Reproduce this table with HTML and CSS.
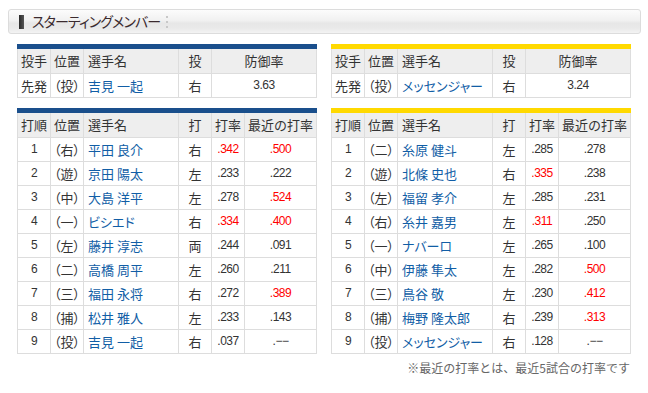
FILE: index.html
```html
<!DOCTYPE html>
<html lang="ja">
<head>
<meta charset="utf-8">
<title>スターティングメンバー</title>
<link rel="stylesheet" href="styles.css">
</head>
<body>
<div class="page">
  <div class="title-box">
    <span class="marker"></span>
    <h2 class="title">スターティングメンバー</h2>
    <span class="dots"><i></i><i></i><i></i></span>
  </div>

  <div class="teams">
    <div class="team">
      <div class="tbl tbl-pitch blue">
        <div class="tr head">
          <div class="c">投手</div><div class="c">位置</div><div class="c name">選手名</div><div class="c">投</div><div class="c">防御率</div>
        </div>
        <div class="tr">
          <div class="c">先発</div><div class="c pos">（投）</div><div class="c name link">吉見 一起</div><div class="c">右</div><div class="c num">3.63</div>
        </div>
      </div>

      <div class="tbl tbl-bat blue">
        <div class="tr head">
          <div class="c">打順</div><div class="c">位置</div><div class="c name">選手名</div><div class="c">打</div><div class="c">打率</div><div class="c">最近の打率</div>
        </div>
        <div class="tr"><div class="c num">1</div><div class="c pos">（右）</div><div class="c name link">平田 良介</div><div class="c">右</div><div class="c num red">.342</div><div class="c num red">.500</div></div>
        <div class="tr"><div class="c num">2</div><div class="c pos">（遊）</div><div class="c name link">京田 陽太</div><div class="c">左</div><div class="c num">.233</div><div class="c num">.222</div></div>
        <div class="tr"><div class="c num">3</div><div class="c pos">（中）</div><div class="c name link">大島 洋平</div><div class="c">左</div><div class="c num">.278</div><div class="c num red">.524</div></div>
        <div class="tr"><div class="c num">4</div><div class="c pos">（一）</div><div class="c name link">ビシエド</div><div class="c">右</div><div class="c num red">.334</div><div class="c num red">.400</div></div>
        <div class="tr"><div class="c num">5</div><div class="c pos">（左）</div><div class="c name link">藤井 淳志</div><div class="c">両</div><div class="c num">.244</div><div class="c num">.091</div></div>
        <div class="tr"><div class="c num">6</div><div class="c pos">（二）</div><div class="c name link">高橋 周平</div><div class="c">左</div><div class="c num">.260</div><div class="c num">.211</div></div>
        <div class="tr"><div class="c num">7</div><div class="c pos">（三）</div><div class="c name link">福田 永将</div><div class="c">右</div><div class="c num">.272</div><div class="c num red">.389</div></div>
        <div class="tr"><div class="c num">8</div><div class="c pos">（捕）</div><div class="c name link">松井 雅人</div><div class="c">左</div><div class="c num">.233</div><div class="c num">.143</div></div>
        <div class="tr"><div class="c num">9</div><div class="c pos">（投）</div><div class="c name link">吉見 一起</div><div class="c">右</div><div class="c num">.037</div><div class="c num">.−−</div></div>
      </div>
    </div>

    <div class="team">
      <div class="tbl tbl-pitch yellow">
        <div class="tr head">
          <div class="c">投手</div><div class="c">位置</div><div class="c name">選手名</div><div class="c">投</div><div class="c">防御率</div>
        </div>
        <div class="tr">
          <div class="c">先発</div><div class="c pos">（投）</div><div class="c name link">メッセンジャー</div><div class="c">右</div><div class="c num">3.24</div>
        </div>
      </div>

      <div class="tbl tbl-bat yellow">
        <div class="tr head">
          <div class="c">打順</div><div class="c">位置</div><div class="c name">選手名</div><div class="c">打</div><div class="c">打率</div><div class="c">最近の打率</div>
        </div>
        <div class="tr"><div class="c num">1</div><div class="c pos">（二）</div><div class="c name link">糸原 健斗</div><div class="c">左</div><div class="c num">.285</div><div class="c num">.278</div></div>
        <div class="tr"><div class="c num">2</div><div class="c pos">（遊）</div><div class="c name link">北條 史也</div><div class="c">右</div><div class="c num red">.335</div><div class="c num">.238</div></div>
        <div class="tr"><div class="c num">3</div><div class="c pos">（左）</div><div class="c name link">福留 孝介</div><div class="c">左</div><div class="c num">.285</div><div class="c num">.231</div></div>
        <div class="tr"><div class="c num">4</div><div class="c pos">（右）</div><div class="c name link">糸井 嘉男</div><div class="c">左</div><div class="c num red">.311</div><div class="c num">.250</div></div>
        <div class="tr"><div class="c num">5</div><div class="c pos">（一）</div><div class="c name link">ナバーロ</div><div class="c">左</div><div class="c num">.265</div><div class="c num">.100</div></div>
        <div class="tr"><div class="c num">6</div><div class="c pos">（中）</div><div class="c name link">伊藤 隼太</div><div class="c">左</div><div class="c num">.282</div><div class="c num red">.500</div></div>
        <div class="tr"><div class="c num">7</div><div class="c pos">（三）</div><div class="c name link">鳥谷 敬</div><div class="c">左</div><div class="c num">.230</div><div class="c num red">.412</div></div>
        <div class="tr"><div class="c num">8</div><div class="c pos">（捕）</div><div class="c name link">梅野 隆太郎</div><div class="c">右</div><div class="c num">.239</div><div class="c num red">.313</div></div>
        <div class="tr"><div class="c num">9</div><div class="c pos">（投）</div><div class="c name link">メッセンジャー</div><div class="c">右</div><div class="c num">.128</div><div class="c num">.−−</div></div>
      </div>
      <p class="note">※最近の打率とは、最近5試合の打率です</p>
    </div>
  </div>
</div>
</body>
</html>
```

FILE: styles.css
```css
* { box-sizing: border-box; }
html, body { margin: 0; padding: 0; background: #fff; }
body {
  font-family: "Noto Sans CJK JP", "Noto Sans", sans-serif;
  font-size: 13px;
  color: #333;
}
.page {
  width: 648px;
  padding: 9px 8px 0 8px;
}
.title-box {
  width: 633px;
  height: 25px;
  border: 1px solid #dcdcdc;
  border-radius: 3px;
  background: linear-gradient(to bottom, #fcfcfc 0%, #f1f1f1 45%, #e7e7e7 58%, #e9e9e9 78%, #f3f3f3 100%);
  display: flex;
  align-items: center;
  padding-left: 10px;
}
.marker {
  width: 5px;
  height: 14px;
  background: linear-gradient(to right, #2a2a2a, #555);
  margin-top: 1px;
}
.title {
  margin: 0 0 0 8px;
  font-size: 14px;
  font-weight: normal;
  color: #3a2a2e;
  font-feature-settings: "palt";
  letter-spacing: -0.9px;
  line-height: 23px;
}
.dots {
  display: flex;
  flex-direction: column;
  gap: 3px;
  margin-left: 6px;
}
.dots i {
  display: block;
  width: 2px;
  height: 2px;
  background: #c8c8c8;
}
.teams {
  display: flex;
  gap: 14px;
  margin: 10px 0 0 9px;
}
.team { width: 300px; }
.tbl {
  display: grid;
  gap: 1px;
  background: #dddddd;
  padding: 0 1px 1px 1px;
  border-top: 5px solid #1a4f8c;
}
.tbl.yellow { border-top-color: #ffd900; }
.tbl-pitch { margin-bottom: 10px; }
.tr {
  display: grid;
  gap: 1px;
}
.tbl-pitch .tr { grid-template-columns: 32px 32px 94px 32px 104px; }
.tbl-bat .tr { grid-template-columns: 32px 32px 94px 32px 32px 71px; }
.c {
  background: #fff;
  height: 23px;
  line-height: 23px;
  text-align: center;
  white-space: nowrap;
  overflow: hidden;
}
.head .c {
  background: #eeeeee;
  height: 24px;
  line-height: 24px;
}
.name { text-align: left; padding-left: 4px; }
.link { color: #115ea6; font-feature-settings: "palt"; }
.pos { font-feature-settings: "palt"; }
.num {
  font-family: "Liberation Sans", Arial, sans-serif;
  font-size: 12px;
  letter-spacing: -0.5px;
}
.red { color: #ff0000; }
.note {
  margin: 5px 0 0 0;
  text-align: right;
  font-size: 12px;
  line-height: 17px;
  color: #666;
  padding-right: 1px;
}
```
